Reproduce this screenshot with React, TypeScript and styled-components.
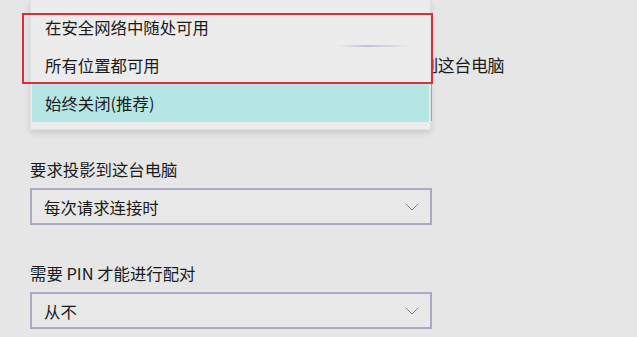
import React from "react";
import styled, { createGlobalStyle } from "styled-components";

const GlobalStyle = createGlobalStyle`
  html, body {
    margin: 0;
    padding: 0;
    background: #e6e6e6;
  }
  body {
    font-family: "Noto Sans CJK SC", "Noto Sans", sans-serif;
    color: #1b1b1b;
  }
`;

const Screen = styled.div`
  position: relative;
  width: 637px;
  height: 337px;
  overflow: hidden;
  background: #e6e6e6;
  padding: 54px 0 0 30px;
  box-sizing: border-box;
`;

const Section = styled.section`
  display: flex;
  flex-direction: column;
  gap: 8px;
  margin-bottom: 37px;
`;

const Label = styled.div<{ $size?: number; $spacing?: number }>`
  font-size: ${(p) => p.$size ?? 16.4}px;
  line-height: 22px;
  height: 22px;
  white-space: nowrap;
  letter-spacing: ${(p) => p.$spacing ?? 0}px;
`;

const Select = styled.div`
  width: 402px;
  height: 37px;
  box-sizing: border-box;
  border: 2px solid #aaa9c1;
  background: #e8e8e8;
  display: flex;
  align-items: center;
  justify-content: space-between;
  padding: 0 11px 0 12px;
  font-size: 16.4px;
`;

const Chevron = () => (
  <svg width="14" height="8" viewBox="0 0 14 8">
    <path d="M0.5 0.5 L7 7 L13.5 0.5" fill="none" stroke="#8a8a8a" strokeWidth="1" />
  </svg>
);

/* 展开的下拉菜单，盖在第一个设置上面 */
const Popup = styled.div`
  position: absolute;
  left: 30px;
  top: 0;
  width: 401px;
  padding: 8px 1px 7px;
  box-sizing: border-box;
  background: #ececec;
  border: 1px solid #e0e0e0;
  border-top: none;
  box-shadow: 0 3px 6px rgba(0, 0, 0, 0.12);
  display: flex;
  flex-direction: column;
`;

const Option = styled.div<{ $selected?: boolean }>`
  position: relative;
  height: 38px;
  display: flex;
  align-items: center;
  padding-left: 13px;
  font-size: 16.4px;
  background: ${(p) => (p.$selected ? "#b5e6e4" : "transparent")};
`;

const FaintLine = styled.div`
  position: absolute;
  right: 16px;
  bottom: -1px;
  width: 76px;
  height: 2px;
  background: linear-gradient(90deg, rgba(190, 188, 210, 0), rgba(190, 188, 210, 0.9) 40%, rgba(190, 188, 210, 0));
`;

const RedMark = styled.div`
  position: absolute;
  left: 22px;
  top: 13px;
  width: 411px;
  height: 71px;
  box-sizing: border-box;
  border: 2px solid #d3313b;
  pointer-events: none;
`;

const App: React.FC = () => {
  return (
    <>
      <GlobalStyle />
      <Screen>
        <Section>
          <Label $size={17} $spacing={-0.44}>
            当你同意时，某些 Windows 和 Android 设备可以投影到这台电脑
          </Label>
          <Select>
            始终关闭(推荐)
            <Chevron />
          </Select>
        </Section>

        <Section>
          <Label>要求投影到这台电脑</Label>
          <Select>
            每次请求连接时
            <Chevron />
          </Select>
        </Section>

        <Section>
          <Label>需要 PIN 才能进行配对</Label>
          <Select>
            从不
            <Chevron />
          </Select>
        </Section>

        <Popup>
          <Option>
            在安全网络中随处可用
            <FaintLine />
          </Option>
          <Option>所有位置都可用</Option>
          <Option $selected>始终关闭(推荐)</Option>
        </Popup>

        <RedMark />
      </Screen>
    </>
  );
};

export default App;
